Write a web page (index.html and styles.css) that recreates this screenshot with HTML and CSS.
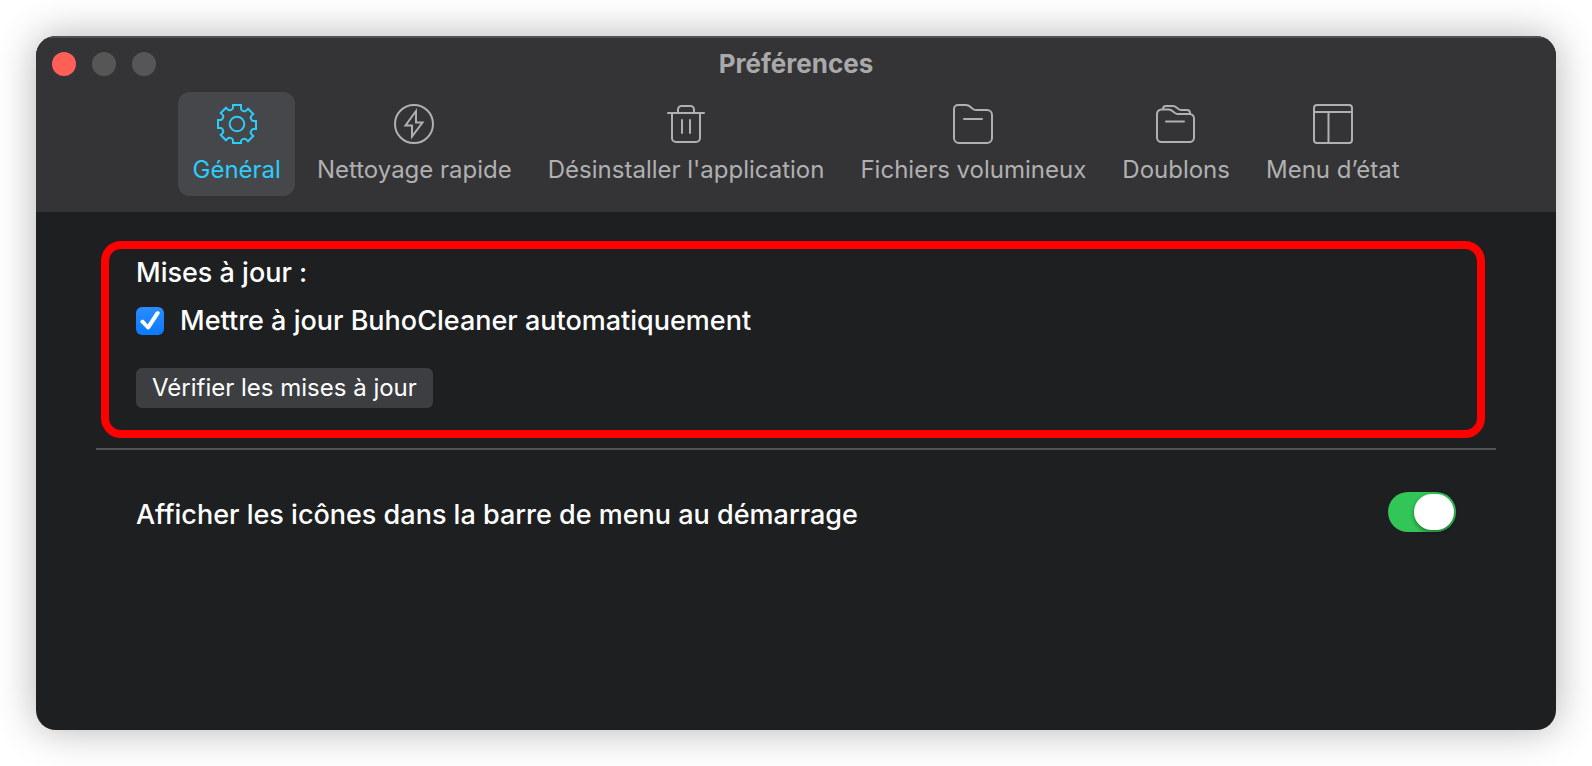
FILE: index.html
```html
<!DOCTYPE html>
<html lang="fr">
<head>
  <meta charset="UTF-8">
  <meta name="viewport" content="width=device-width, initial-scale=1.0">
  <title>Préférences</title>
  <link rel="stylesheet" href="styles.css">
</head>
<body>
  <div class="window">
    <header class="toolbar">
      <div class="titlebar">
        <div class="lights">
          <button class="light close" aria-label="Fermer"></button>
          <button class="light" aria-label="Réduire" disabled></button>
          <button class="light" aria-label="Agrandir" disabled></button>
        </div>
        <h1>Préférences</h1>
      </div>

      <nav class="tabs">
        <button class="tab active">
          <svg class="icon" viewBox="0 0 40 40">
            <path d="M16 1h8v3.500q0 1.500 1.400 2.100l1.200.5q1.400.6 2.500-.5l1.900-1.900l5.300 5.300l-1.900 1.900q-1.100 1.100-.5 2.500l.5 1.200q.6 1.400 2.100 1.400H39v8h-2.500q-1.500 0-2.100 1.400l-.5 1.200q-.6 1.400.5 2.500l1.900 1.900l-5.300 5.300l-1.900-1.900q-1.100-1.100-2.500-.5l-1.200.5q-1.400.6-1.400 2.100V39h-8v-2.500q0-1.500-1.400-2.100l-1.200-.5q-1.400-.6-2.500.5L9 36.300L3.700 31l1.900-1.900q1.100-1.100.5-2.500l-.5-1.200Q5 24 3.500 24H1v-8h2.500q1.500 0 2.100-1.400l.5-1.200q.6-1.400-.5-2.500L3.700 9L9 3.700l1.900 1.900q1.100 1.100 2.500.5l1.200-.5Q16 5 16 3.500z"/>
            <circle cx="20" cy="20" r="7.300"/>
          </svg>
          <span>Général</span>
        </button>
        <button class="tab">
          <svg class="icon" viewBox="0 0 40 40">
            <circle cx="20" cy="20" r="19"/>
            <path d="M22 7L11.500 21.500H18V32.500L28.500 18.500H22z"/>
          </svg>
          <span>Nettoyage rapide</span>
        </button>
        <button class="tab">
          <svg class="icon" viewBox="0 0 40 40">
            <path d="M2 9H38M6 9V34a4 4 0 0 0 4 4H30a4 4 0 0 0 4-4V9M12 9V5.500a3.500 3.500 0 0 1 3.500-3.500H24.500a3.500 3.500 0 0 1 3.500 3.500V9M16 16V29M24 16V29"/>
          </svg>
          <span>Désinstaller l'application</span>
        </button>
        <button class="tab">
          <svg class="icon" viewBox="0 0 40 40">
            <path d="M1 5a4 4 0 0 1 4-4H13Q15.500 1 17.500 3L20 5Q21.500 6 23.500 6H34a5 5 0 0 1 5 5V34a5 5 0 0 1-5 5H6a5 5 0 0 1-5-5zM11 15H29"/>
          </svg>
          <span>Fichiers volumineux</span>
        </button>
        <button class="tab">
          <svg class="icon" viewBox="0 0 40 40">
            <path d="M1 10a4.500 4.500 0 0 1 4.500-4.500H12.500Q15 5.500 17 7.500L19 9Q20.500 10 22.500 10H33.500a4.500 4.500 0 0 1 4.500 4.500V33.500a4.500 4.500 0 0 1-4.500 4.500H5.500a4.500 4.500 0 0 1-4.500-4.500zM10 17.500H28M7 5.500V5a3 3 0 0 1 3-3H17Q19 2 20.500 3.500L22.500 5Q24 6 25.500 6H31a3 3 0 0 1 3 3V10"/>
          </svg>
          <span>Doublons</span>
        </button>
        <button class="tab">
          <svg class="icon" viewBox="0 0 40 40">
            <rect x="1" y="1" width="38" height="38" rx="3"/>
            <path d="M1 8H39M15.500 8V39"/>
          </svg>
          <span>Menu d’état</span>
        </button>
      </nav>
    </header>

    <main class="content">
      <section class="updates">
        <h2>Mises à jour :</h2>
        <label class="check-row">
          <input type="checkbox" class="checkbox" checked>
          Mettre à jour BuhoCleaner automatiquement
        </label>
        <button class="check-button">Vérifier les mises à jour</button>
      </section>

      <section class="startup">
        <label for="menu-icons">Afficher les icônes dans la barre de menu au démarrage</label>
        <input type="checkbox" id="menu-icons" class="switch" role="switch" checked>
      </section>
    </main>
  </div>
</body>
</html>
```
FILE: styles.css
```css
* {
  box-sizing: border-box;
}
body {
  margin: 0;
  padding: 36px;
  min-height: 100vh;
  display: flex;
  background-color: #fff;
  color: #fff;
  font-family: Inter, "Liberation Sans", sans-serif;
  font-size: 27px;
  font-weight: 500;
  line-height: 34px;
}
h1, h2 {
  margin: 0;
}
button {
  font: inherit;
  color: inherit;
  border: none;
  padding: 0;
}
.window {
  flex: 1;
  display: flex;
  flex-direction: column;
  overflow: hidden;
  border-radius: 20px;
  background-color: #1e1f21;
  box-shadow: 0 0 40px rgba(0, 0, 0, 0.3);
}

/* toolbar */
.toolbar {
  padding: 16px;
  background-color: #343436;
  box-shadow: inset 0 2px #515153;
}
.titlebar {
  display: grid;
  grid-template-columns: 1fr auto 1fr;
  align-items: center;
  margin-bottom: 16px;
}
.titlebar h1 {
  font-size: 26px;
  font-weight: 700;
  line-height: 24px;
  color: #a9a9aa;
}
.lights {
  display: flex;
  gap: 16px;
}
.light {
  width: 24px;
  height: 24px;
  border-radius: 50%;
  background-color: #565656;
}
.close {
  background-color: #ff5f57;
}
.tabs {
  display: flex;
  justify-content: center;
  gap: 8px;
}
.tab {
  display: flex;
  flex-direction: column;
  align-items: center;
  gap: 12px;
  padding: 12px 14px;
  border-radius: 12px;
  background: none;
  color: #b0b0b1;
  font-size: 24px;
  font-weight: 400;
  line-height: 28px;
  white-space: nowrap;
}
.tab.active {
  background-color: #46474b;
  color: #2dcdfb;
}
.icon {
  width: 40px;
  height: 40px;
  fill: none;
  stroke: currentColor;
  stroke-width: 2;
  stroke-linecap: round;
}

/* content */
.content {
  padding: 29px 60px;
}
.updates {
  display: flex;
  flex-direction: column;
  align-items: flex-start;
  margin: 0 11px 10px 5px;
  padding: 7px 27px 22px;
  border: 8px solid #f00;
  border-radius: 20px;
}
.updates h2 {
  font-size: 27px;
  font-weight: 500;
}
.check-row {
  display: flex;
  align-items: center;
  gap: 16px;
  margin: 14px 0 30px;
}
.checkbox {
  appearance: none;
  width: 28px;
  height: 28px;
  margin: 0;
  border-radius: 6px;
  background: linear-gradient(#2a8cff, #0a7aff);
  display: grid;
  place-items: center;
}
.checkbox:checked::before {
  content: "";
  width: 20px;
  height: 20px;
  background-color: #fff;
  clip-path: polygon(0 54%, 8% 44%, 18% 44%, 38% 68%, 80% 4%, 92% 0, 100% 10%, 50% 88%, 40% 94%, 32% 88%);
}
.check-button {
  height: 40px;
  padding: 0 16px;
  border-radius: 6px;
  background-color: #3d3e41;
  font-size: 24px;
  font-weight: 400;
}
.startup {
  display: flex;
  align-items: flex-end;
  justify-content: space-between;
  padding: 42px 40px 0;
  border-top: 2px solid #545456;
}
.switch {
  appearance: none;
  width: 68px;
  height: 40px;
  margin: 0;
  padding: 2px;
  border-radius: 20px;
  background-color: #32c557;
  display: flex;
}
.switch::before {
  content: "";
  width: 40px;
  height: 36px;
  border-radius: 18px;
  background-color: #fff;
  box-shadow: 0 2px 4px rgba(0, 0, 0, 0.4);
}
.switch:checked {
  justify-content: flex-end;
}
```
